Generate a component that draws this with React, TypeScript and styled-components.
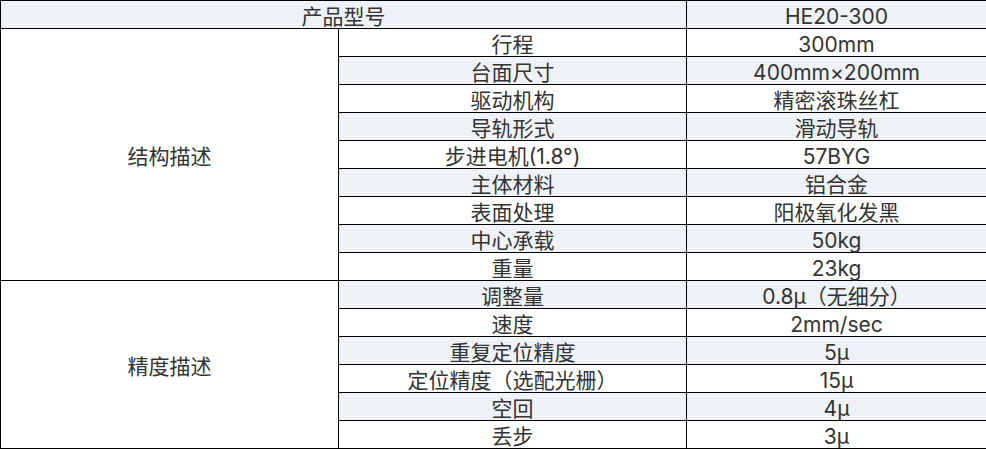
import React from "react";
import styled, { createGlobalStyle } from "styled-components";

const Global = createGlobalStyle`
  html, body { margin: 0; padding: 0; background: #fff; }
  body { font-family: "Inter", "Noto Sans CJK SC", sans-serif; }
`;

const Table = styled.table`
  border-collapse: collapse;
  table-layout: fixed;
  width: 986px;
  font-family: "Inter", "Noto Sans CJK SC", sans-serif;
  font-size: 21px;
  color: #333;
`;

const Cell = styled.td<{ $shade?: boolean }>`
  border: 1px solid #000;
  box-sizing: border-box;
  height: 28px;
  padding: 4px 0 0;
  text-align: center;
  vertical-align: middle;
  line-height: 23px;
  white-space: nowrap;
  background: ${(p) => (p.$shade ? "#eef2f7" : "#fff")};
`;

const GroupCell = styled(Cell)`
  background: #fff;
`;

type Group = { title: string; rows: [string, string][] };

const groups: Group[] = [
  {
    title: "结构描述",
    rows: [
      ["行程", "300mm"],
      ["台面尺寸", "400mm×200mm"],
      ["驱动机构", "精密滚珠丝杠"],
      ["导轨形式", "滑动导轨"],
      ["步进电机(1.8°)", "57BYG"],
      ["主体材料", "铝合金"],
      ["表面处理", "阳极氧化发黑"],
      ["中心承载", "50kg"],
      ["重量", "23kg"],
    ],
  },
  {
    title: "精度描述",
    rows: [
      ["调整量", "0.8μ（无细分）"],
      ["速度", "2mm/sec"],
      ["重复定位精度", "5μ"],
      ["定位精度（选配光栅）", "15μ"],
      ["空回", "4μ"],
      ["丢步", "3μ"],
    ],
  },
];

export default function App() {
  let idx = 0;
  return (
    <>
      <Global />
      <Table>
        <colgroup>
          <col style={{ width: 338 }} />
          <col style={{ width: 348 }} />
          <col style={{ width: 300 }} />
        </colgroup>
        <tbody>
          <tr>
            <Cell colSpan={2} $shade>
              产品型号
            </Cell>
            <Cell $shade>HE20-300</Cell>
          </tr>
          {groups.map((g) =>
            g.rows.map(([k, v], i) => {
              idx += 1;
              const shade = idx % 2 === 0;
              return (
                <tr key={g.title + k}>
                  {i === 0 && <GroupCell rowSpan={g.rows.length}>{g.title}</GroupCell>}
                  <Cell $shade={shade}>{k}</Cell>
                  <Cell $shade={shade}>{v}</Cell>
                </tr>
              );
            })
          )}
        </tbody>
      </Table>
    </>
  );
}
